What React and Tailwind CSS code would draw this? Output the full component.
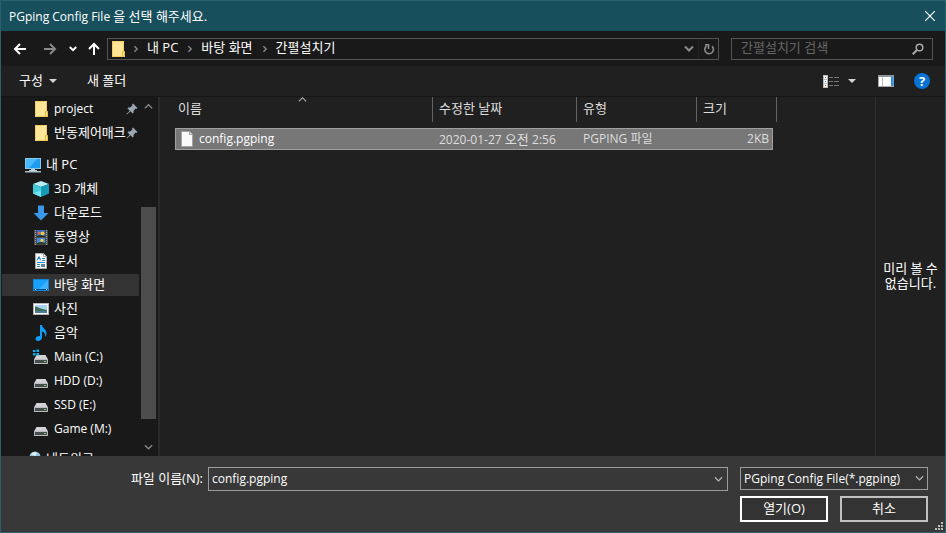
import React from 'react';

function Chevron({ dir = 'down', className = '', size = 8, stroke = 1.6 }) {
  const paths = {
    down: 'M1 2.5 L5 6.5 L9 2.5',
    up: 'M1 7 L5 3 L9 7',
    right: 'M3 1.5 L6.5 5 L3 8.5',
  };
  return (
    <svg viewBox="0 0 10 10" width={size} height={size} className={className} fill="none" stroke="currentColor" strokeWidth={stroke} aria-hidden="true">
      <path d={paths[dir]} />
    </svg>
  );
}

function Arrow({ rotate = '' }) {
  return (
    <svg viewBox="0 0 14 14" width="14" height="14" className={rotate} fill="none" stroke="currentColor" strokeWidth="2" aria-hidden="true">
      <path d="M13 7 H2 M7 2 L2 7 L7 12" />
    </svg>
  );
}

function Triangle() {
  return (
    <svg viewBox="0 0 8 4" width="8" height="4" fill="#d4d4d4" aria-hidden="true">
      <path d="M0 0H8L4 4Z" />
    </svg>
  );
}

function FolderIcon() {
  return (
    <svg viewBox="0 0 16 16" width="16" height="16" className="shrink-0" aria-hidden="true">
      <path d="M2 0H14V10.500H15V16H2Z" fill="#ffe596" />
      <path d="M2.500 0V15.500H12.500M2 .5H13.500V10" fill="none" stroke="#f3cf63" />
      <path d="M12.500 10.500H14.500V15.500H12.500Z" fill="#ffe08a" stroke="#e9bd45" />
    </svg>
  );
}

function PinIcon() {
  return (
    <svg viewBox="0 0 12 12" width="12" height="12" fill="#9aa7b1" aria-hidden="true">
      <path d="M7 0.5 L11.5 5 L10.5 6 L9.6 5.6 L7.5 8 L7.6 9.8 L6.7 10.5 L4.3 8.2 L1 11.5 L.5 11 L3.7 7.7 L1.4 5.3 L2.2 4.4 L4 4.5 L6.4 2.4 L6 1.5Z" />
    </svg>
  );
}

function PcIcon() {
  return (
    <svg viewBox="0 0 16 16" width="16" height="16" aria-hidden="true">
      <rect x="0" y="1" width="16" height="11" fill="#8bc9ec" />
      <rect x="1" y="2" width="14" height="9" fill="#1e9cf0" />
      <path d="M1 2H12L4 11H1Z" fill="#4ab9fb" />
      <path d="M6 12h4v1h2v1H4v-1h2Z" fill="#c4d3dc" />
      <path d="M0 14H16V15.5H0Z" fill="#a9bcc8" />
    </svg>
  );
}

function CubeIcon() {
  return (
    <svg viewBox="0 0 16 16" width="16" height="16" aria-hidden="true">
      <path d="M0 3L8 0L16 3L8 6Z" fill="#b5edf5" />
      <path d="M0 3L8 6V16L0 12.5Z" fill="#40cbdd" />
      <path d="M16 3L8 6V16L16 12.5Z" fill="#159bb8" />
      <path d="M0 12.5L8 9V16Z" fill="#73e1ec" />
    </svg>
  );
}

function DownloadIcon() {
  return (
    <svg viewBox="0 0 16 16" width="16" height="16" aria-hidden="true">
      <path d="M5 0.5H11V8H15.5L8 15.5L.5 8H5Z" fill="#3a97ea" />
    </svg>
  );
}

function VideoIcon() {
  return (
    <svg viewBox="0 0 16 16" width="16" height="16" aria-hidden="true">
      <rect x="1" y="1" width="14" height="15" fill="#4b4b4b" />
      <path d="M2.500 1V16M13.500 1V16" stroke="#a3a3a3" strokeDasharray="1 1" />
      <rect x="4" y="1" width="8" height="7" fill="#336ac8" />
      <rect x="4" y="9" width="8" height="6" fill="#4686e6" />
      <circle cx="6" cy="4" r="1.5" fill="#d96a4d" />
      <circle cx="9.5" cy="4.5" r="2" fill="#e5c948" />
      <path d="M4 7l4-1 4 1v1H4Z" fill="#27371e" />
      <circle cx="9" cy="11.5" r="1.7" fill="#e8cf40" />
      <path d="M4 14l4-1 4 1v1H4Z" fill="#27371e" />
    </svg>
  );
}

function DocumentIcon() {
  return (
    <svg viewBox="0 0 16 16" width="16" height="16" aria-hidden="true">
      <path d="M2.500 .5H10.500L13.500 3.500V15.500H2.500Z" fill="#fafafa" stroke="#aaa" />
      <path d="M10.500 .5V3.500H13.500" fill="none" stroke="#aaa" />
      <path d="M4 7.500L6 3.500L7.500 7.500M5 5.500H7.500M9 5.500h3M9 7.500h3M4 9.500H12M4 11.500H7M4 13.500H7" fill="none" stroke="#2a85c8" />
      <rect x="8" y="11" width="4" height="3" fill="#4d8ba5" />
    </svg>
  );
}

function DesktopIcon() {
  return (
    <svg viewBox="0 0 16 16" width="16" height="16" aria-hidden="true">
      <rect x="0" y="2" width="16" height="12" fill="#0f85dc" />
      <rect x="1" y="3" width="14" height="9" fill="#18a0fb" />
      <path d="M15 3V12H6Z" fill="#3db2ff" />
      <path d="M1 12.5H15" stroke="#0a4f91" />
      <path d="M2 12.5h1M13 12.5h1" stroke="#fff" />
    </svg>
  );
}

function PictureIcon() {
  return (
    <svg viewBox="0 0 16 16" width="16" height="16" aria-hidden="true">
      <rect x=".5" y="2.5" width="15" height="11" fill="#fff" stroke="#b5b5b5" />
      <rect x="2" y="4" width="12" height="8" fill="#a7d5ed" />
      <path d="M2 5.5C5 6 7 8 14 9V10H2Z" fill="#3f6e5a" />
      <rect x="2" y="10" width="12" height="2" fill="#4c7d9f" />
    </svg>
  );
}

function MusicIcon() {
  return (
    <svg viewBox="0 0 16 16" width="16" height="16" fill="#129cf4" aria-hidden="true">
      <path d="M7 0H9C9 3 13.5 4 13.5 8C13.5 9.5 13 11 12 12C12.500 9 11.500 7 9 6.500V12.500C9 14.500 7 16 5 16C3.500 16 2.500 15 2.500 13.700C2.500 11.800 4.800 10.500 7 11Z" />
    </svg>
  );
}

function DriveIcon({ windows }) {
  return (
    <svg viewBox="0 0 16 16" width="16" height="16" aria-hidden="true">
      <path d="M3.500 6H12.500L15 10.500H1Z" fill="#d2d2d6" />
      <rect x="1" y="10" width="14" height="5" fill="#b9bbbe" />
      <rect x="2" y="11" width="12" height="3" fill="#484b4d" />
      <rect x="11" y="12" width="2" height="1" fill="#43ef53" />
      {windows && <path d="M0 1H2.500V3H0ZM3.500 .5H6V3H3.500ZM0 4H2.500V6.500H0ZM3.500 4H6V6.500H3.500Z" fill="#08b1f2" />}
    </svg>
  );
}

function NetworkIcon() {
  return (
    <svg viewBox="0 0 16 16" width="16" height="16" aria-hidden="true">
      <circle cx="10" cy="6" r="5.500" fill="#93c8e3" />
      <path d="M6 3C8 1 11 1 12 2L10 5Z" fill="#e7f4f8" />
      <rect x="0" y="7" width="10" height="7" fill="#289de4" />
    </svg>
  );
}

const quick = ['project', '반동제어매크'];
const places = [
  ['3D 개체', <CubeIcon />],
  ['다운로드', <DownloadIcon />],
  ['동영상', <VideoIcon />],
  ['문서', <DocumentIcon />],
  ['바탕 화면', <DesktopIcon />],
  ['사진', <PictureIcon />],
  ['음악', <MusicIcon />],
  ['Main (C:)', <DriveIcon windows />],
  ['HDD (D:)', <DriveIcon />],
  ['SSD (E:)', <DriveIcon />],
  ['Game (M:)', <DriveIcon />],
];

function TreeItem({ label, icon, indent = 'pl-[31px]', selected, pinned }) {
  const latin = /^[\x20-\x7e]+$/.test(label);
  return (
    <li className="h-6 shrink-0 pb-0.5">
      <button className={`flex h-full w-full items-center whitespace-nowrap text-left ${indent} ${selected ? 'bg-[#333333]' : ''}`}>
        <span className="mr-[5px] shrink-0">{icon}</span>
        <span className={latin ? 'text-[12px]' : 'pb-0.5 text-[13px]'}>{label}</span>
        {pinned && <span className="ml-auto shrink-0 pr-px"><PinIcon /></span>}
      </button>
    </li>
  );
}

function TitleBar() {
  return (
    <header className="flex h-[30px] shrink-0 items-center justify-between bg-[#174f5d] pl-2 pr-2.5">
      <h1 className="text-[12px]">PGping Config File <span className="text-[13px]">을 선택 해주세요.</span></h1>
      <button aria-label="닫기">
        <svg viewBox="0 0 10 10" width="10" height="10" stroke="white" strokeWidth="1.2" aria-hidden="true">
          <path d="M0 0L10 10M10 0L0 10" />
        </svg>
      </button>
    </header>
  );
}

function NavBar() {
  return (
    <nav className="flex h-[35px] shrink-0 items-center bg-[#191919] pl-3 pr-3">
      <button aria-label="뒤로"><Arrow /></button>
      <button aria-label="앞으로" className="ml-4 text-[#8a8a8a]"><Arrow rotate="rotate-180" /></button>
      <button aria-label="최근 위치" className="ml-3"><Chevron size={8} stroke={2.4} /></button>
      <button aria-label="위로" className="ml-2.5"><Arrow rotate="rotate-90" /></button>
      <div className="ml-1.5 flex h-[22px] min-w-0 flex-1 items-center border border-[#535353] pl-0.5 text-[13px]">
        <FolderIcon />
        {['내 PC', '바탕 화면', '간펼설치기'].map((name) => (
          <React.Fragment key={name}>
            <Chevron dir="right" size={8} className="ml-1.5 mr-[7px] shrink-0 text-[#8c8c8c]" />
            <button className="whitespace-nowrap pb-[3px] pr-0.5">{name}</button>
          </React.Fragment>
        ))}
        <button aria-label="이전 위치" className="ml-auto mr-1 text-[#8c8c8c]"><Chevron size={10} stroke={2} /></button>
        <button aria-label="새로 고침" className="flex h-full items-center border-l border-[#222222] pl-1 pr-[3px]">
          <svg viewBox="0 0 12 12" width="12" height="12" fill="none" stroke="#8c8c8c" strokeWidth="1.600" aria-hidden="true">
            <path d="M9 3.200A4.300 4.300 0 1 1 3.500 3M2 1.800H5.500V6" />
          </svg>
        </button>
      </div>
      <label className="ml-3 flex h-[22px] w-[202px] items-center border border-[#535353] pl-[9px] pr-2">
        <input type="search" aria-label="간펼설치기 검색" placeholder="간펼설치기 검색" className="min-w-0 flex-1 bg-transparent pb-[3px] text-[13px] outline-none placeholder:text-[#666666]" />
        <svg viewBox="0 0 12 12" width="12" height="12" fill="none" stroke="#a8a8a8" aria-hidden="true">
          <circle cx="7.500" cy="4.500" r="3.300" strokeWidth="1.500" />
          <path d="M5 7L.7 11.300" strokeWidth="2" />
        </svg>
      </label>
    </nav>
  );
}

function ToolBar() {
  return (
    <div className="flex h-[31px] shrink-0 items-center border-b border-[#161616] bg-[#202020] pl-[18px] pr-[15px] text-[13px]">
      <button className="flex items-center gap-1.5"><span className="pb-0.5">구성</span> <Triangle /></button>
      <button className="ml-[30px] pb-0.5">새 폴더</button>
      <button aria-label="보기" className="ml-auto">
        <svg viewBox="0 0 16 13" width="16" height="13" aria-hidden="true">
          <path d="M0 0H5V13H0Z" fill="#bdbdbd" />
          <path d="M1 1h3v3H1ZM1 5h3v3H1ZM1 9h3v3H1Z" fill="#fff" />
          <path d="M2 2.500h1" stroke="#4d6d50" />
          <path d="M2 6.500h1" stroke="#2280d2" />
          <path d="M2 10.500h1" stroke="#cf3328" />
          <path d="M6 2.500h4m1 0h5M6 6.500h4m1 0h5M6 10.500h4m1 0h5" stroke="#777" />
        </svg>
      </button>
      <button aria-label="보기 옵션" className="ml-[9px]"><Triangle /></button>
      <button aria-label="미리 보기 창" className="ml-[22px]">
        <svg viewBox="0 0 16 12" width="16" height="12" aria-hidden="true">
          <rect x=".5" y=".5" width="15" height="11" fill="#fff" stroke="#a6a6a6" />
          <path d="M0 0H16V2H0Z" fill="#8f969b" />
          <path d="M4.500 2V11" stroke="#bbb" />
          <path d="M13 2H15.500V11H13Z" fill="#2d91e5" />
          <path d="M13 1h1" stroke="#2d91e5" />
        </svg>
      </button>
      <button aria-label="도움말" className="ml-5 flex size-4 items-center justify-center rounded-full bg-[#0873d4] text-[13px] font-bold leading-4">?</button>
    </div>
  );
}

function Sidebar() {
  return (
    <aside className="flex w-[157px] shrink-0 bg-[#191919]">
      <ul className="flex min-w-0 flex-1 flex-col overflow-hidden pl-px pt-px">
        {quick.map((name) => (
          <TreeItem key={name} label={name} icon={<FolderIcon />} pinned />
        ))}
        <li className="h-2 shrink-0" />
        <TreeItem label="내 PC" icon={<PcIcon />} indent="pl-[23px]" />
        {places.map(([label, icon]) => (
          <TreeItem key={label} label={label} icon={icon} selected={label === '바탕 화면'} />
        ))}
        <li className="h-1.5 shrink-0" />
        <TreeItem label="네트워크" icon={<NetworkIcon />} indent="pl-[23px]" />
      </ul>
      <div className="flex w-[19px] shrink-0 flex-col items-center pr-px text-[#858585]">
        <button aria-label="위로 스크롤" className="flex h-[18px] items-center"><Chevron dir="up" size={9} /></button>
        <div className="flex w-[15px] flex-1 flex-col">
          <div className="flex-[92]" />
          <div className="flex-[212] bg-[#4d4d4d]" />
          <div className="flex-[20]" />
        </div>
        <button aria-label="아래로 스크롤" className="flex h-[17px] items-center"><Chevron size={9} /></button>
      </div>
    </aside>
  );
}

function FileList() {
  const head = 'h-[31px] p-0 align-top font-normal';
  const cell = 'h-[22px] border-y border-[#a0a0a0] bg-[#777777] p-0 whitespace-nowrap';
  return (
    <main className="relative min-w-0 flex-1 border-l-2 border-[#2b2b2b] bg-[#202020] pl-[15px]">
      <Chevron dir="up" size={9} stroke={1.2} className="absolute left-[138px] top-[-2px] text-[#b4b4b4]" />
      <table className="w-[602px] table-fixed border-separate border-spacing-0 text-left">
        <colgroup>
          <col className="w-[258px]" />
          <col className="w-[144px]" />
          <col className="w-[120px]" />
          <col className="w-[76px]" />
          <col className="w-1" />
        </colgroup>
        <thead className="text-[13px] text-[#dedede]">
          <tr>
            <th className={head}><div className="h-[25px] border-r border-[#636363] pl-[3px] leading-[22px]">이름</div></th>
            <th className={head}><div className="h-[25px] border-r border-[#636363] pl-1.5 leading-[22px]">수정한 날짜</div></th>
            <th className={head}><div className="h-[25px] border-r border-[#636363] pl-1.5 leading-[22px]">유형</div></th>
            <th className={head}><div className="h-[25px] pl-1.5 leading-[22px]">크기</div></th>
            <td className={head}><div className="h-[25px] border-r border-[#636363]" /></td>
          </tr>
        </thead>
        <tbody className="text-[12px] text-[#dedede]">
          <tr>
            <td className={`${cell} border-l text-white`}>
              <div className="flex items-center gap-1 pl-[3px]">
                <svg viewBox="0 0 16 16" width="16" height="16" aria-hidden="true">
                  <path d="M2.500 .5H10.500L13.500 3.500V15.500H2.500Z" fill="#fafafa" stroke="#a3a3a3" />
                  <path d="M10.500 .5V3.500H13.500" fill="#ddd" stroke="#a3a3a3" />
                </svg>
                config.pgping
              </div>
            </td>
            <td className={`${cell} pl-1.5`}>2020-01-27 <span className="text-[13px]">오전 </span>2:56</td>
            <td className={`${cell} pl-1.5`}>PGPING 파일</td>
            <td className={`${cell} border-r pr-[3px] text-right`}>2KB</td>
          </tr>
        </tbody>
      </table>
    </main>
  );
}

function Footer() {
  const button = 'h-[26px] w-[88px] border-2 bg-[#333333] pb-0.5 text-[13px]';
  return (
    <footer className="relative flex h-[76px] shrink-0 items-start gap-3 bg-[#383838] pl-[127px] pr-[17px] pt-[11px]">
      <div className="flex min-w-0 flex-1 items-center gap-[5px]">
        <label htmlFor="filename" className="w-[75px] shrink-0 whitespace-nowrap pb-0.5 text-right text-[13px]">파일 이름(N):</label>
        <div className="flex h-6 min-w-0 flex-1 items-center border border-[#9b9b9b] pr-1">
          <input id="filename" defaultValue="config.pgping" className="min-w-0 flex-1 bg-transparent pl-[3px] text-[12px] outline-none" />
          <button aria-label="파일 이름 목록" className="text-[#b8b8b8]"><Chevron size={9} stroke={1.3} /></button>
        </div>
      </div>
      <div className="flex w-[188px] shrink-0 flex-col gap-1.5">
        <div className="relative">
          <select aria-label="파일 형식" className="block h-[23px] w-full appearance-none border border-[#9b9b9b] bg-[#333333] pl-[3px] text-[12px] outline-none">
            <option>PGping Config File(*.pgping)</option>
          </select>
          <Chevron size={9} stroke={1.3} className="pointer-events-none absolute right-1 top-[7px] text-[#b8b8b8]" />
        </div>
        <div className="flex gap-3">
          <button className={`${button} border-white`}>열기(O)</button>
          <button className={`${button} border-[#c0c0c0]`}>취소</button>
        </div>
      </div>
      <svg viewBox="0 0 8 8" width="8" height="8" fill="#bcbcbc" className="absolute bottom-0.5 right-0.5" aria-hidden="true">
        <path d="M6 0h2v2H6ZM3 3h2v2H3ZM6 3h2v2H6ZM0 6h2v2H0ZM3 6h2v2H3ZM6 6h2v2H6Z" />
      </svg>
    </footer>
  );
}

export default function App() {
  return (
    <div className="flex h-screen flex-col border border-[#2a6070] bg-[#202020] font-['Open_Sans','Noto_Sans_CJK_KR',sans-serif] text-[12px] leading-4 text-white">
      <TitleBar />
      <NavBar />
      <ToolBar />
      <div className="flex min-h-0 flex-1">
        <Sidebar />
        <FileList />
        <aside className="flex w-[70px] shrink-0 items-center justify-center border-l border-[#2e2e2e] bg-[#202020] pb-0.5 text-center text-[13px] leading-[15px]">
          <p>미리 볼 수 없습니다.</p>
        </aside>
      </div>
      <Footer />
    </div>
  );
}
